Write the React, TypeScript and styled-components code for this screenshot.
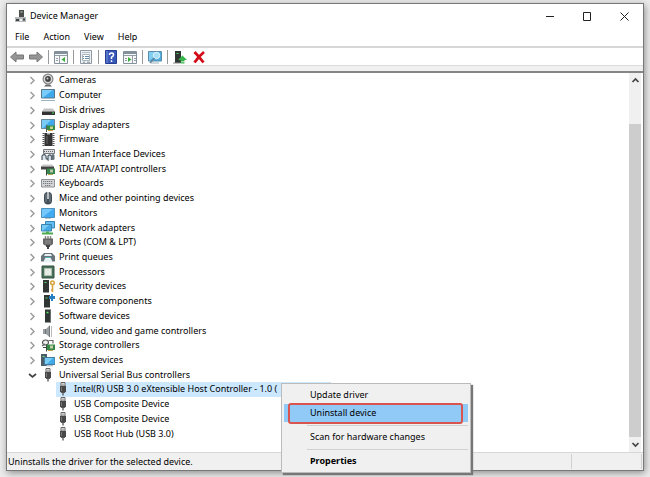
import React from "react";
import styled, { createGlobalStyle, css } from "styled-components";

const Global = createGlobalStyle`
  * { box-sizing: border-box; }
  body { margin: 0; background: #ebebeb; font: 9px/14px "Noto Sans", "Open Sans", sans-serif; color: #000; }
  button { font: inherit; color: inherit; background: none; border: 0; padding: 0; text-align: left; white-space: nowrap; }
  svg { display: block; flex: none; }
`;

const Desktop = styled.div`
  min-height: 100vh;
  display: flex;
  padding: 3px 6px 6px;
`;

const Window = styled.main`
  position: relative;
  flex: 1;
  min-width: 0;
  display: flex;
  flex-direction: column;
  background: #fff;
  border: 1px solid #777;
  box-shadow: 1px 2px 7px rgba(0, 0, 0, 0.4);
`;

const TitleBar = styled.header`
  display: flex;
  align-items: center;
  height: 24px;
  padding-left: 6px;
  gap: 3px;
`;

const Title = styled.h1`
  flex: 1;
  margin: 0;
  font-size: 9px;
  font-weight: 400;
`;

const WindowButton = styled.button`
  display: flex;
  align-items: center;
  justify-content: center;
  width: 30px;
  height: 24px;
`;

const WindowButtons = styled.div`
  display: flex;
  gap: 7px;
  padding-right: 4px;
`;

const MenuBar = styled.nav`
  display: flex;
  align-items: center;
  gap: 14px;
  height: 18px;
  padding-left: 8px;
`;

const ToolBar = styled.div`
  display: flex;
  align-items: center;
  height: 20px;
  border-top: 2px solid #d6d6d6;
  border-bottom: 1px solid #dcdcdc;
`;

const ToolButton = styled.button`
  display: flex;
  align-items: center;
  justify-content: center;
  width: 19px;
  height: 16px;
`;

const ToolDivider = styled.span`
  width: 1px;
  height: 14px;
  margin: 0 2px 0 3px;
  background: #999;
`;

const Body = styled.section`
  flex: 1;
  display: flex;
  margin-top: 5px;
  padding-right: 2px;
  border-top: 2px solid #858585;
  box-shadow: 0 -5px 0 #f0f0f0;
`;

const Tree = styled.ul`
  flex: 1;
  min-width: 0;
  display: grid;
  grid-auto-rows: 1fr;
  margin: 0;
  padding: 0 0 11px 20px;
  list-style: none;
`;

const TreeItem = styled.li<{ $child?: boolean }>`
  display: flex;
  align-items: center;
  padding-left: ${(p) => (p.$child ? 29 : 0)}px;
`;

const Expander = styled.button`
  display: flex;
  justify-content: center;
  width: 11px;
  padding-top: 1px;
`;

const Node = styled.button<{ $child?: boolean; $selected?: boolean }>`
  display: flex;
  align-items: center;
  height: 100%;
  gap: 4px;
  padding-left: ${(p) => (p.$child ? 0 : 3)}px;
  ${(p) =>
    p.$selected &&
    css`
      width: 275px;
      background: #cce8ff;
    `}
`;

const ScrollBar = styled.div`
  display: flex;
  flex-direction: column;
  width: 12px;
  background: #f0f0f0;
`;

const ScrollButton = styled.button`
  display: flex;
  align-items: center;
  justify-content: center;
  height: 15px;
`;

const ScrollTrack = styled.div`
  flex: 1;
  padding-top: 36px;
  display: flex;
`;

const Thumb = styled.div`
  flex: 1;
  background: #cdcdcd;
`;

const StatusBar = styled.footer`
  display: flex;
  align-items: center;
  height: 18px;
  padding: 0 1px;
  background: #f0f0f0;
  border-top: 1px solid #d7d7d7;
`;

const StatusText = styled.span`
  flex: 1;
`;

const StatusCell = styled.span`
  width: 71px;
  height: 15px;
  border: solid #d0d0d0;
  border-width: 0 1px;
`;

const ContextMenu = styled.div`
  position: absolute;
  left: 274px;
  top: 379px;
  width: 190px;
  padding: 2px;
  background: #f0f0f0;
  border: 1px solid #bbb;
  box-shadow: 2px 2px 1px #777;
`;

const MenuItem = styled.button<{ $active?: boolean; $strong?: boolean }>`
  position: relative;
  display: block;
  width: 100%;
  height: 18px;
  padding-left: 26px;
  font-weight: ${(p) => (p.$strong ? 700 : 400)};
  background: ${(p) => (p.$active ? "#91c9f7" : "transparent")};
`;

const Marker = styled.span`
  position: absolute;
  inset: -1px 5px -2px 4px;
  border: 2px solid #d9534f;
  border-radius: 3px;
`;

const MenuRule = styled.hr`
  height: 1px;
  margin: 3px 0 2px 23px;
  border: 0;
  background: #d0d0d0;
`;

const art: Record<string, React.ReactNode> = {
  camera: (
    <>
      <path d="M3 13.500h8l-2-2H5z" fill="#666" />
      <circle cx="7" cy="6" r="5.500" fill="#858585" />
      <circle cx="7" cy="6" r="4.300" fill="#dcdcdc" />
      <circle cx="7" cy="6" r="2.900" fill="#444" />
      <circle cx="6.500" cy="5.400" r="1" fill="#ccc" />
    </>
  ),
  computer: (
    <>
      <path d="M.5 1.500h13v8.500H.5z" fill="#3fa9ec" stroke="#58768a" />
      <path d="M1 2h11L2 9.500H1z" fill="#79cbfa" />
      <path d="M0 12.500h14" stroke="#9db3c2" />
    </>
  ),
  disk: (
    <>
      <path d="M3 5.500h9l2 3H1z" fill="#c4c4c4" />
      <path d="M1 8.500h13v3.500H1z" fill="#333" />
      <path d="M11 9.500h2v1h-2z" fill="#4de45c" />
    </>
  ),
  display: (
    <>
      <path d="M.5 1.500h13v9H.5z" fill="#3fa9ec" stroke="#6689a0" />
      <path d="M1 2h9L2 10H1z" fill="#7acbf8" />
      <path d="M6 7.500h8v4.500H6z" fill="#348d42" />
      <path d="M9 8.500h3v2.500H9z" fill="#ccd08b" />
      <path d="M5.500 7v7" stroke="#58635a" />
      <path d="M7 12.500h5" stroke="#d3a53a" />
    </>
  ),
  firmware: (
    <>
      <path d="M3.500 1h8v13h-8z" fill="#333" />
      <path d="M6 1h3v1.500H6z" fill="#bbb" />
      <path d="M2.500 1v13M12.500 1v13" stroke="#555" strokeWidth="2" strokeDasharray="1 1" />
      <path d="M6 4v8" stroke="#666" />
    </>
  ),
  hid: (
    <>
      <path d="M2.500 2.500h11v4h-11z" fill="#ddd" stroke="#747b80" />
      <path d="M3 4.500h10" stroke="#666" strokeDasharray="1 1" />
      <path d="M1 13V9q2-3 4 0v2l2 2V9q2-2 3.500 0v4" fill="#dce5ec" stroke="#56646f" strokeWidth="1.300" />
      <rect x="10.500" y="7" width="3" height="6" rx="1.500" fill="#64717b" />
    </>
  ),
  ide: (
    <>
      <path d="M2 2.500h9l2 2H0z" fill="#c9c9c9" />
      <path d="M0 4.500h13v3H0z" fill="#444" />
      <path d="M6 6.500h8V12H6z" fill="#37864a" />
      <path d="M9 7.500h3v3H9z" fill="#b9c7b0" />
      <path d="M5.500 6v7.500" stroke="#3c4b40" />
      <path d="M7 12.500h5" stroke="#b3a24f" />
    </>
  ),
  keyboard: (
    <>
      <path d="M.5 3.500h13v7.500H.5z" fill="#d4d6d8" stroke="#909396" />
      <path d="M2 5.500h10M2 7.500h10M4 9.500h6" stroke="#777c80" strokeDasharray="1.300 .7" />
    </>
  ),
  mouse: (
    <>
      <rect x="3" y="1" width="8" height="12.500" rx="4" fill="#444e57" />
      <path d="M5 3v8M9 3v8" stroke="#7d8992" />
      <path d="M7 1v7" stroke="#dbe2e7" strokeWidth="1.500" />
    </>
  ),
  monitor: (
    <>
      <path d="M.5 2.500h13v9H.5z" fill="#42aaf0" stroke="#4f91bd" />
      <path d="M1 3h11L2 11H1z" fill="#74c7fa" />
      <path d="M4 12.500h6" stroke="#b8c6cf" />
    </>
  ),
  network: (
    <>
      <path d="M4.500 .5h9v6.500h-9z" fill="#62bdf2" stroke="#3784b4" />
      <path d="M.5 3.500h10V10H.5z" fill="#46a9e6" stroke="#3a84ad" />
      <path d="M1 4h7L2 9.500H1z" fill="#77caf5" />
      <path d="M5 10.500h3v1h4v2H1v-2h4z" fill="#4cac4f" />
    </>
  ),
  plug: (
    <>
      <path d="M4.500 1v4M9.500 1v4M7 1v3" stroke="#888" strokeWidth="1.500" />
      <path d="M2 3.500h10V9l-2 1.500H4L2 9z" fill="#666" />
      <path d="M5 5v4M7 5v4M9 5v4" stroke="#aaa" strokeWidth=".7" />
      <path d="M5 10h4v2H8v2H6v-2H5z" fill="#444" />
    </>
  ),
  printer: (
    <>
      <path d="M3 3h8l3 3v5.500h-3L9.500 8h-5L3 11.500H0V6z" fill="#68747b" />
      <path d="M4 4h6l1 2H3z" fill="#e6eef0" />
      <path d="M4 8.500h6l1.500 4h-9z" fill="#e8f1f5" />
      <path d="M4 7.500h6" stroke="#55b4b3" />
    </>
  ),
  cpu: (
    <>
      <path d="M1 1h12v12H1z" fill="#49705a" stroke="#33533f" />
      <path d="M3.500 3.500h7v7h-7z" fill="#e6ebe6" stroke="#adc0b0" />
    </>
  ),
  security: (
    <>
      <path d="M2 1h6v12.500H2z" fill="#303633" />
      <path d="M3.500 3.500h2" stroke="#55d86a" />
      <circle cx="11.500" cy="3.800" r="1.800" fill="none" stroke="#d5a13a" strokeWidth="1.500" />
      <path d="M11.500 6v7m0-2H10" stroke="#d5a13a" strokeWidth="1.500" />
    </>
  ),
  component: (
    <>
      <path d="M3 1h6v12.500H3z" fill="#303633" />
      <path d="M4.500 4h2" stroke="#55d86a" />
      <path d="M8 2h2V0h2v2h2v3h-2v2h-2V5H8z" fill="#2580c3" />
    </>
  ),
  software: (
    <>
      <path d="M4 .5h6v13H4z" fill="#303633" />
      <path d="M5.500 3.500h2" stroke="#55e96a" strokeWidth="1.500" />
      <path d="M9.500 1v12" stroke="#69716d" />
    </>
  ),
  sound: (
    <>
      <path d="M2 5h3l4-4v12.500L5 10H2z" fill="#9a9fa2" />
      <path d="M4.500 5v5M8.500 2v11" stroke="#6e7478" />
      <path d="M10.500 2v11" stroke="#bbb" />
    </>
  ),
  storage: (
    <>
      <ellipse cx="4.500" cy="4.500" rx="3" ry="2.500" fill="#eee" stroke="#555" strokeWidth="1.200" />
      <path d="M7.500 2.500H12v3M1 8l3-2" fill="none" stroke="#666" strokeWidth="1.200" />
      <path d="M6 6.500h8V12H6z" fill="#368845" />
      <path d="M9 7.500h3v3H9z" fill="#c3cda6" />
      <path d="M5.500 6.500v7M2 9.500h3" stroke="#3c4b40" />
      <path d="M7 12.500h5" stroke="#c5a243" />
    </>
  ),
  system: (
    <>
      <path d="M0 1h6v12H0z" fill="#4c5d69" />
      <path d="M1.500 3.500h2" stroke="#6fe07f" />
      <path d="M3.500 4.500h10.500V11.500H3.500z" fill="#42aae8" stroke="#427b9d" />
      <path d="M4 5h8l-6 6H4z" fill="#79ccf6" />
      <path d="M5 12.800h7" stroke="#9aabb5" />
    </>
  ),
  usb: (
    <>
      <path d="M5 .5h4V4H5z" fill="#eee" stroke="#666" />
      <path d="M7 1.500v1.500" stroke="#777" />
      <path d="M4 4h6v5.500L8.500 11h-3L4 9.500z" fill="#484848" />
      <path d="M5.500 5v4" stroke="#777" />
      <path d="M7 10.500v3" stroke="#666" strokeWidth="1.500" />
    </>
  ),
  back: <path d="M.5 7l5.500-5v3h7.500v4H6v3z" fill="#959595" stroke="#777" />,
  forward: <path d="M13.500 7L8 2v3H.5v4H8v3z" fill="#959595" stroke="#777" />,
  panelLeft: (
    <>
      <path d="M.5 1.500h13v12H.5z" fill="#f6f8f9" stroke="#84909a" />
      <path d="M1 3h12" stroke="#84909a" strokeWidth="2" />
      <path d="M5.500 6v7M1 5.500h12M2 8.500h2M2 10.500h2" stroke="#929da5" />
      <path d="M11 7v5L7.500 9.500z" fill="#3dad3b" />
    </>
  ),
  panelRight: (
    <>
      <path d="M.5 1.500h13v12H.5z" fill="#f6f8f9" stroke="#84909a" />
      <path d="M1 3h12" stroke="#84909a" strokeWidth="2" />
      <path d="M9.500 6v7M1 5.500h12M11 8.500h2M11 10.500h2M2 8.500h2M2 10.500h2" stroke="#929da5" />
      <path d="M5 7v5l3.500-2.500z" fill="#3dad3b" />
    </>
  ),
  properties: (
    <>
      <path d="M1.500 .5h11v13h-11z" fill="#eef2f4" stroke="#8d98a2" />
      <path d="M3 2.500h8" stroke="#b5bec5" />
      <path d="M3.500 4.500h7v6h-7z" fill="#fff" stroke="#aab4bb" />
      <path d="M4 6.500h1m1 0h4M4 8.500h1m1 0h4" stroke="#668ba8" />
      <path d="M4 12.200h2m2 0h3" stroke="#7e8b94" />
    </>
  ),
  help: (
    <>
      <path d="M1.500 .5h11v13h-11z" fill="#3858ba" stroke="#263d91" />
      <path d="M3 1v12" stroke="#7690dc" />
      <path d="M5.500 5q0-2 2-2t2 1.700Q9.500 6 7.500 7.200V9M7.500 10.200V12" fill="none" stroke="#fff" strokeWidth="1.500" />
    </>
  ),
  scan: (
    <>
      <path d="M.5 1.500h13V11H.5z" fill="#4aade0" stroke="#5b8baa" />
      <path d="M1 2h10L2 10.500H1z" fill="#80cef1" />
      <path d="M3 13h8" stroke="#9fb0b9" />
      <circle cx="8.500" cy="5.500" r="3.200" fill="#a4def8" stroke="#e4f4fc" />
      <path d="M6.500 8L2 13" stroke="#65839a" strokeWidth="1.500" />
    </>
  ),
  update: (
    <>
      <path d="M2 1h6v12H2z" fill="#303633" />
      <path d="M3.500 3.500h2" stroke="#58d76b" />
      <path d="M0 13h7" stroke="#888" />
      <path d="M9.500 5.500L14 10h-2.500v1.500h-4V10H5zM7.500 12.200h4v1.300h-4z" fill="#35b44a" />
    </>
  ),
  remove: <path d="M2.500 2q4 4 9 10.500M12 2Q7 6 2.500 12.500" stroke="#d20c19" strokeWidth="2.800" fill="none" />,
  device: (
    <>
      <path d="M6 1h5v8H6z" fill="#4d4d4d" />
      <path d="M7.500 3h2" stroke="#bde3c0" />
      <path d="M2 8h11v5H2z" fill="#b4b9bc" />
      <path d="M3 10h3v2H3zM10 9.500h2v2h-2z" fill="#444" />
      <path d="M7 10h2v2H7z" fill="#f2f2f2" />
    </>
  ),
};

const Icon = ({ name }: { name: string }) => (
  <svg width="14" height="14" viewBox="0 0 14 14" fill="none" aria-hidden="true">
    {art[name]}
  </svg>
);

const Chevron = ({ d, strong }: { d: string; strong?: boolean }) => (
  <svg width="9" height="9" viewBox="0 0 9 9" fill="none" aria-hidden="true">
    <path d={d} stroke={strong ? "#444" : "#999"} strokeWidth={strong ? 1.7 : 1.4} />
  </svg>
);

const categories = [
  ["Cameras", "camera"],
  ["Computer", "computer"],
  ["Disk drives", "disk"],
  ["Display adapters", "display"],
  ["Firmware", "firmware"],
  ["Human Interface Devices", "hid"],
  ["IDE ATA/ATAPI controllers", "ide"],
  ["Keyboards", "keyboard"],
  ["Mice and other pointing devices", "mouse"],
  ["Monitors", "monitor"],
  ["Network adapters", "network"],
  ["Ports (COM & LPT)", "plug"],
  ["Print queues", "printer"],
  ["Processors", "cpu"],
  ["Security devices", "security"],
  ["Software components", "component"],
  ["Software devices", "software"],
  ["Sound, video and game controllers", "sound"],
  ["Storage controllers", "storage"],
  ["System devices", "system"],
  ["Universal Serial Bus controllers", "usb"],
];

const usbDevices = [
  "Intel(R) USB 3.0 eXtensible Host Controller - 1.0 (",
  "USB Composite Device",
  "USB Composite Device",
  "USB Root Hub (USB 3.0)",
];

const tools: (string[] | null)[] = [
  ["back", "Back"],
  ["forward", "Forward"],
  null,
  ["panelLeft", "Show console tree"],
  null,
  ["properties", "Properties"],
  null,
  ["help", "Help"],
  ["panelRight", "Show action pane"],
  null,
  ["scan", "Scan for hardware changes"],
  null,
  ["update", "Update driver"],
  ["remove", "Uninstall device"],
];

export default function App() {
  return (
    <>
      <Global />
      <Desktop>
        <Window>
          <TitleBar>
            <Icon name="device" />
            <Title>Device Manager</Title>
            <WindowButtons>
              <WindowButton aria-label="Minimize">
                <svg width="9" height="9"><path d="M0 4.500h8" stroke="#222" /></svg>
              </WindowButton>
              <WindowButton aria-label="Maximize">
                <svg width="9" height="9"><path d="M.5 .5h7v8h-7z" fill="none" stroke="#222" /></svg>
              </WindowButton>
              <WindowButton aria-label="Close">
                <svg width="9" height="9"><path d="M.5 .5l8 8M8.500 .5l-8 8" stroke="#222" /></svg>
              </WindowButton>
            </WindowButtons>
          </TitleBar>
          <MenuBar>
            {["File", "Action", "View", "Help"].map((m) => (
              <button key={m}>{m}</button>
            ))}
          </MenuBar>
          <ToolBar>
            {tools.map((t, i) =>
              t ? (
                <ToolButton key={i} aria-label={t[1]}>
                  <Icon name={t[0]} />
                </ToolButton>
              ) : (
                <ToolDivider key={i} />
              ),
            )}
          </ToolBar>
          <Body>
            <Tree>
              {categories.map(([label, icon], i) => {
                const open = i === categories.length - 1;
                return (
                  <TreeItem key={label}>
                    <Expander aria-label={`Toggle ${label}`} aria-expanded={open}>
                      <Chevron d={open ? "M1 3l3.500 3L8 3" : "M2.500 1L6 4.500 2.500 8"} strong={open} />
                    </Expander>
                    <Node>
                      <Icon name={icon} />
                      {label}
                    </Node>
                  </TreeItem>
                );
              })}
              {usbDevices.map((label, i) => (
                <TreeItem key={i} $child>
                  <Node $child $selected={i === 0}>
                    <Icon name="usb" />
                    {label}
                  </Node>
                </TreeItem>
              ))}
            </Tree>
            <ScrollBar>
              <ScrollButton aria-label="Scroll up">
                <Chevron strong d="M1.500 6l3-3 3 3" />
              </ScrollButton>
              <ScrollTrack>
                <Thumb />
              </ScrollTrack>
              <ScrollButton aria-label="Scroll down">
                <Chevron strong d="M1.500 3l3 3 3-3" />
              </ScrollButton>
            </ScrollBar>
          </Body>
          <StatusBar>
            <StatusText>Uninstalls the driver for the selected device.</StatusText>
            <StatusCell />
          </StatusBar>
          <ContextMenu>
            <MenuItem>Update driver</MenuItem>
            <MenuItem $active>
              Uninstall device
              <Marker />
            </MenuItem>
            <MenuRule />
            <MenuItem>Scan for hardware changes</MenuItem>
            <MenuRule />
            <MenuItem $strong>Properties</MenuItem>
          </ContextMenu>
        </Window>
      </Desktop>
    </>
  );
}
